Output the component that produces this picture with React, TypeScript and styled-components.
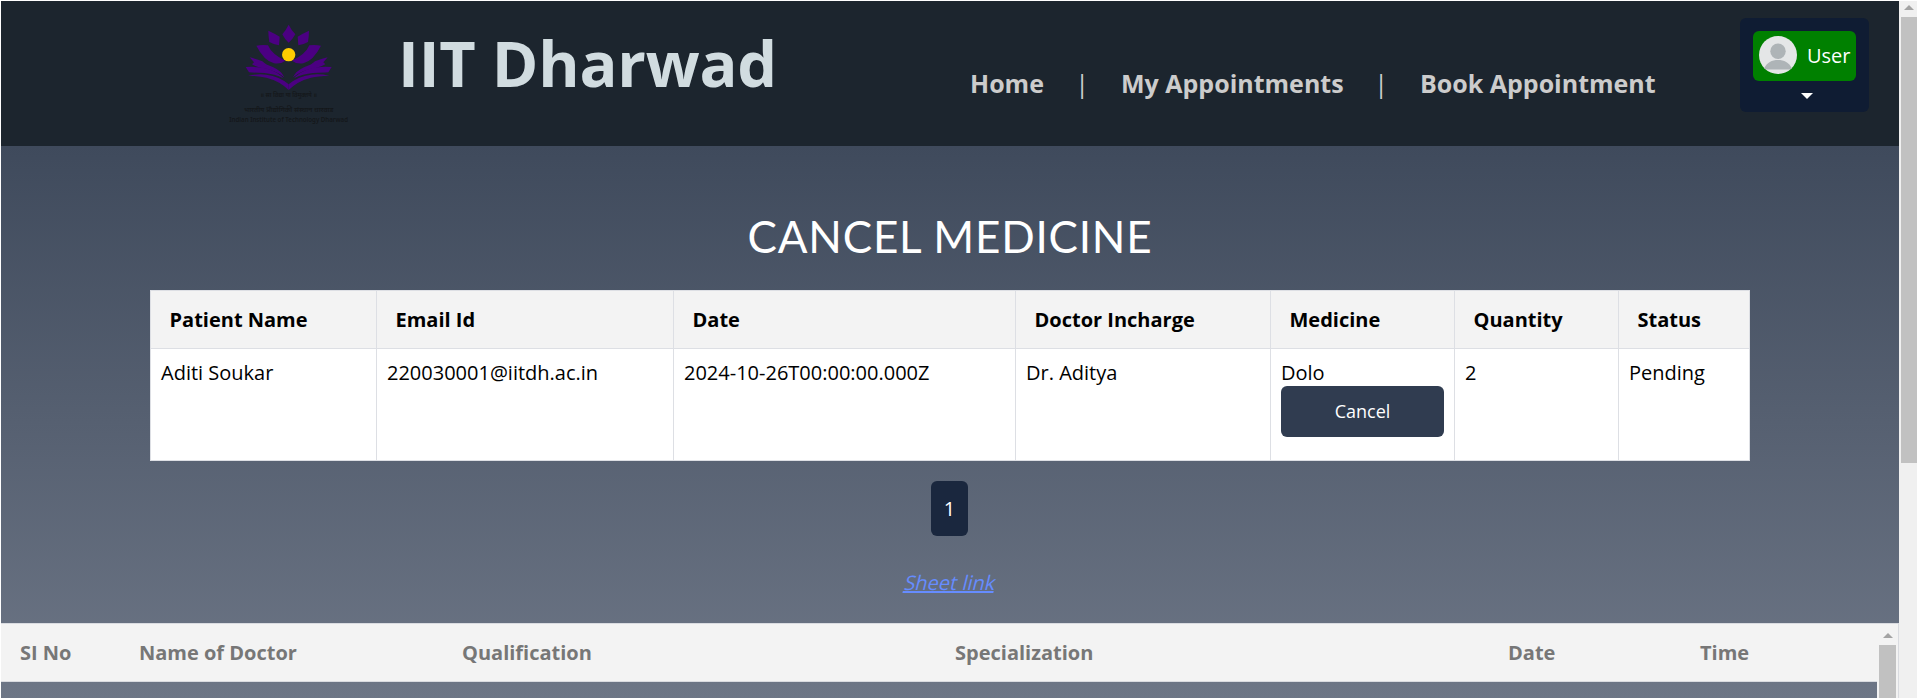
import React from "react";
import styled, { createGlobalStyle } from "styled-components";

const Global = createGlobalStyle`
  * { box-sizing: border-box; }
  html, body { margin: 0; padding: 0; overflow: hidden; background: #fff; }
  body { font-family: "Open Sans", sans-serif; font-size: 20px; color: #000; }
`;

const Window = styled.div`
  display: flex;
  width: 1918px;
  height: 699px;
  padding: 1px 1px 1px 1px;
  overflow: hidden;
`;

const Page = styled.div`
  display: flex;
  flex: none;
  flex-direction: column;
  width: 1898px;
  height: 697px;
  overflow: hidden;
  background: linear-gradient(180deg, #3f4a5c 145px, #6d7686 697px);
`;

const Header = styled.header`
  display: flex;
  flex: none;
  height: 145px;
  background: #1c252e;
`;

const Logo = styled.svg`
  flex: none;
  width: 140px;
  height: 115px;
  margin: 14px 0 0 219px;
`;

const Brand = styled.h1`
  margin: 18px 0 0 38px;
  width: 562px;
  font-size: 63px;
  line-height: 88px;
  letter-spacing: -0.2px;
  font-weight: 700;
  color: #d1dce0;
  white-space: nowrap;
`;

const Nav = styled.nav`
  display: flex;
  align-items: center;
  height: 35px;
  margin-top: 65px;
  margin-left: 10px;
  width: 763px;
  white-space: nowrap;
`;

const NavLink = styled.a<{ $width: number }>`
  flex: none;
  width: ${(p) => p.$width}px;
  font-size: 25px;
  line-height: 35px;
  font-weight: 700;
  color: #ccc;
`;

const Divider = styled.span`
  flex: none;
  width: 78px;
  text-align: center;
  font-size: 25px;
  line-height: 35px;
  color: #ccc;
`;

const UserMenu = styled.div`
  display: flex;
  flex-direction: column;
  align-items: center;
  flex: none;
  width: 129px;
  height: 94px;
  margin-top: 17px;
  margin-left: 7px;
  padding: 13px;
  border-radius: 6px;
  background: #0f1c33;
`;

const UserButton = styled.div`
  display: flex;
  align-items: center;
  width: 103px;
  height: 50px;
  padding: 0 0 2px 6px;
  gap: 10px;
  border-radius: 6px;
  background: #008000;
  color: #fff;
  line-height: 27px;
`;

const Caret = styled.span`
  margin-top: 12px;
  margin-left: 5px;
  border: 6px solid transparent;
  border-top-color: #fff;
  border-bottom: 0;
`;

const Title = styled.h2`
  flex: none;
  margin: 60px 0 0;
  height: 84px;
  line-height: 60px;
  text-align: center;
  font-family: Lato, sans-serif;
  font-weight: 400;
  font-size: 44px;
  letter-spacing: 0.8px;
  color: #fff;
`;

const Table = styled.table`
  flex: none;
  width: 1600px;
  margin: 0 149px;
  table-layout: fixed;
  border-collapse: collapse;
  background: #fff;
  line-height: 27px;
  td, th { border: 1px solid #dddfe4; text-align: left; vertical-align: top; }
  th { height: 58px; padding: 15px 18.5px; background: #f3f3f3; font-weight: 700; }
  td { height: 112px; padding: 10px; }
`;

const CancelButton = styled.button`
  display: block;
  width: 163px;
  height: 51px;
  padding: 0;
  border: 0;
  border-radius: 6px;
  background: #303c50;
  color: #fff;
  font: 400 18px/25px "Open Sans", sans-serif;
`;

const PageButton = styled.button`
  flex: none;
  align-self: center;
  width: 37px;
  height: 55px;
  margin-top: 20px;
  margin-right: 1px;
  padding: 0 0 1px;
  border: 0;
  border-radius: 6px;
  background: #1a273e;
  color: #fff;
  font: 400 20px/27px "Open Sans", sans-serif;
`;

const SheetLink = styled.a`
  flex: none;
  align-self: center;
  margin-top: 33px;
  line-height: 27px;
  transform: skewX(-14deg);
  text-decoration: underline;
  text-decoration-thickness: 2px;
  color: #668cff;
`;

const Doctors = styled.section`
  display: flex;
  flex: none;
  height: 75px;
  margin-top: auto;
  border-top: 1px solid #d9dbe0;
`;

const DoctorHead = styled.div`
  display: grid;
  grid-template-columns: 119px 323px 493px 553px 192px 1fr;
  width: 1876px;
  height: 58px;
  padding: 15px 0 15px 19px;
  border-bottom: 1px solid #d9dbe0;
  background: #f3f3f3;
  color: #777;
  font-weight: 700;
  line-height: 27px;
`;

const Track = styled.div<{ $inner?: boolean }>`
  display: flex;
  flex-direction: column;
  align-items: center;
  flex: none;
  width: ${(p) => (p.$inner ? 22 : 18)}px;
  padding-left: ${(p) => (p.$inner ? 0 : 2)}px;
  background: ${(p) => (p.$inner ? "#f3f3f3" : "#f0f0f0")};
  border-right: ${(p) => (p.$inner ? "1px solid #d9dbe0" : "0")};
`;

const UpArrow = styled.span<{ $top: number; $bottom: number }>`
  margin-top: ${(p) => p.$top}px;
  margin-bottom: ${(p) => p.$bottom}px;
  border: 5px solid transparent;
  border-top: 0;
  border-bottom-color: #a3a3a3;
`;

const Thumb = styled.span<{ $height: number; $width: number }>`
  width: ${(p) => p.$width}px;
  height: ${(p) => p.$height}px;
  background: #c1c1c1;
`;

const columns = [
  { label: "Patient Name", width: 226 },
  { label: "Email Id", width: 297 },
  { label: "Date", width: 342 },
  { label: "Doctor Incharge", width: 255 },
  { label: "Medicine", width: 184 },
  { label: "Quantity", width: 164 },
  { label: "Status", width: 131 },
];

const doctorColumns = ["SI No", "Name of Doctor", "Qualification", "Specialization", "Date", "Time"];

function LotusHalf() {
  return (
    <g fill="#4b0082">
      <path d="M145 47 Q163 55 179 65 L177 91 Q160 88 148 81 Q145 64 145 47Z" />
      <path d="M109 92 Q126 89 144 91 Q155 118 196 137 Q183 148 162 145 Q132 137 109 92Z" />
      <path d="M89 127 Q108 132 127 139 Q136 149 160 157 Q184 168 193 187 Q164 164 125 159 Q106 154 96 148 L102 142Z" />
      <path d="M77 156 Q119 154 143 161 Q176 172 190 190 Q164 177 133 174 Q103 173 87 172Z" />
      <path d="M84 182 Q111 176 139 179 Q179 184 206 208 L206 225 Q179 198 139 188 Q118 183 84 182Z" />
    </g>
  );
}

function LotusLogo() {
  return (
    <Logo viewBox="0 0 420 345">
      <LotusHalf />
      <g transform="translate(412 0) scale(-1 1)"><LotusHalf /></g>
      <path fill="#4b0082" d="M206 29 Q215 47 226 58 Q218 73 206 83 Q194 73 187 58 Q197 47 206 29Z" />
      <circle cx="206" cy="119" r="20" fill="#ffcc00" />
      <g fill="#14171a" textAnchor="middle" fontFamily="Noto Sans, sans-serif" fontWeight="600">
        <text x="206" y="246" fontSize="17" textLength="170" lengthAdjust="spacingAndGlyphs">॥ सा विद्या या विमुक्तये ॥</text>
        <text x="206" y="291" fontSize="19" textLength="268" lengthAdjust="spacingAndGlyphs">भारतीय प्रौद्योगिकी संस्थान धारवाड</text>
        <text x="206" y="321" fontSize="19" textLength="356" lengthAdjust="spacingAndGlyphs">Indian Institute of Technology Dharwad</text>
      </g>
    </Logo>
  );
}

function Avatar() {
  return (
    <svg width="38" height="38" viewBox="0 0 38 38">
      <defs><clipPath id="face"><circle cx="19" cy="19" r="19" /></clipPath></defs>
      <g clipPath="url(#face)">
        <rect width="38" height="38" fill="#e4e6e7" />
        <circle cx="19" cy="15.2" r="7.7" fill="#aeb4b7" />
        <path d="M4.5 33.5 C8 26 13 24 19 24 S30 26 33.5 33.5Z" fill="#aeb4b7" />
      </g>
    </svg>
  );
}

export default function App() {
  return (
    <>
      <Global />
      <Window>
        <Page>
          <Header>
            <LotusLogo />
            <Brand>IIT Dharwad</Brand>
            <Nav>
              <NavLink $width={73}>Home</NavLink>
              <Divider>|</Divider>
              <NavLink $width={221}>My Appointments</NavLink>
              <Divider>|</Divider>
              <NavLink $width={236}>Book Appointment</NavLink>
            </Nav>
            <UserMenu>
              <UserButton><Avatar />User</UserButton>
              <Caret />
            </UserMenu>
          </Header>
          <Title>CANCEL MEDICINE</Title>
          <Table>
            <colgroup>
              {columns.map((c) => <col key={c.label} width={c.width} />)}
            </colgroup>
            <thead>
              <tr>{columns.map((c) => <th key={c.label}>{c.label}</th>)}</tr>
            </thead>
            <tbody>
              <tr>
                <td>Aditi Soukar</td>
                <td>220030001@iitdh.ac.in</td>
                <td>2024-10-26T00:00:00.000Z</td>
                <td>Dr. Aditya</td>
                <td>Dolo<CancelButton>Cancel</CancelButton></td>
                <td>2</td>
                <td>Pending</td>
              </tr>
            </tbody>
          </Table>
          <PageButton>1</PageButton>
          <SheetLink>Sheet link</SheetLink>
          <Doctors>
            <DoctorHead>
              {doctorColumns.map((label) => <span key={label}>{label}</span>)}
            </DoctorHead>
            <Track $inner>
              <UpArrow $top={9} $bottom={7} />
              <Thumb $width={17} $height={60} />
            </Track>
          </Doctors>
        </Page>
        <Track>
          <UpArrow $top={4} $bottom={7} />
          <Thumb $width={16} $height={446} />
        </Track>
      </Window>
    </>
  );
}
